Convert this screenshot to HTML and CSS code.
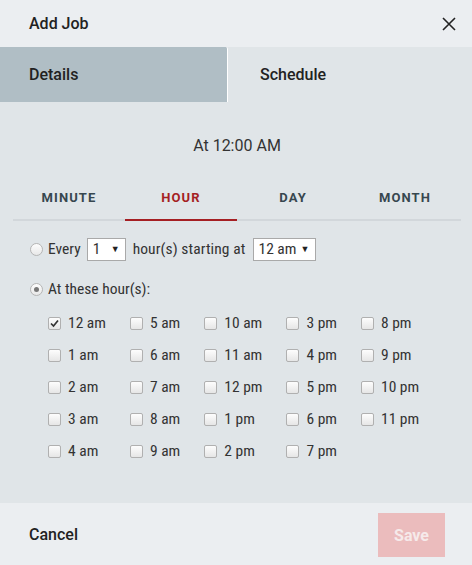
FILE: index.html
```html
<!DOCTYPE html>
<html>
<head>
<meta charset="utf-8">
<link rel="stylesheet" href="styles.css">
</head>
<body>
<div class="dialog">
  <header class="header">
    <span class="title">Add Job</span>
    <svg class="close" width="14" height="14" viewBox="0 0 14 14"><path d="M1 1L13 13M13 1L1 13" stroke="#222" stroke-width="1.6" fill="none"/></svg>
  </header>
  <nav class="tabs">
    <div class="tab tab-active">Details</div>
    <div class="tab">Schedule</div>
  </nav>
  <main class="content">
    <div class="summary">At 12:00 AM</div>
    <div class="subtabs">
      <div class="subtab">MINUTE</div>
      <div class="subtab subtab-active">HOUR</div>
      <div class="subtab">DAY</div>
      <div class="subtab">MONTH</div>
    </div>
    <div class="form">
      <div class="row">
        <span class="radio"></span>
        <span>Every</span>
        <span class="select sel-small">1<span class="caret">▼</span></span>
        <span class="starting">hour(s) starting at</span>
        <span class="select sel-wide">12 am<span class="caret">▼</span></span>
      </div>
      <div class="row">
        <span class="radio radio-on"></span>
        <span>At these hour(s):</span>
      </div>
      <div class="hours">
        <div class="col">
          <label class="hour"><span class="cb cb-on"><svg width="9" height="9" viewBox="0 0 9 9"><path d="M1 4.5L3.5 7L8 1.5" stroke="#333" stroke-width="1.7" fill="none"/></svg></span>12 am</label>
          <label class="hour"><span class="cb"></span>1 am</label>
          <label class="hour"><span class="cb"></span>2 am</label>
          <label class="hour"><span class="cb"></span>3 am</label>
          <label class="hour"><span class="cb"></span>4 am</label>
        </div>
        <div class="col">
          <label class="hour"><span class="cb"></span>5 am</label>
          <label class="hour"><span class="cb"></span>6 am</label>
          <label class="hour"><span class="cb"></span>7 am</label>
          <label class="hour"><span class="cb"></span>8 am</label>
          <label class="hour"><span class="cb"></span>9 am</label>
        </div>
        <div class="col">
          <label class="hour"><span class="cb"></span>10 am</label>
          <label class="hour"><span class="cb"></span>11 am</label>
          <label class="hour"><span class="cb"></span>12 pm</label>
          <label class="hour"><span class="cb"></span>1 pm</label>
          <label class="hour"><span class="cb"></span>2 pm</label>
        </div>
        <div class="col">
          <label class="hour"><span class="cb"></span>3 pm</label>
          <label class="hour"><span class="cb"></span>4 pm</label>
          <label class="hour"><span class="cb"></span>5 pm</label>
          <label class="hour"><span class="cb"></span>6 pm</label>
          <label class="hour"><span class="cb"></span>7 pm</label>
        </div>
        <div class="col">
          <label class="hour"><span class="cb"></span>8 pm</label>
          <label class="hour"><span class="cb"></span>9 pm</label>
          <label class="hour"><span class="cb"></span>10 pm</label>
          <label class="hour"><span class="cb"></span>11 pm</label>
        </div>
      </div>
    </div>
  </main>
  <footer class="footer">
    <span class="cancel">Cancel</span>
    <span class="save">Save</span>
  </footer>
</div>
</body>
</html>
```
FILE: styles.css
```css
* { box-sizing: border-box; }
html, body { margin: 0; padding: 0; }
body { width: 472px; height: 565px; font-family: Roboto, "Liberation Sans", sans-serif; background: #e0e5e8; }
.dialog { display: flex; flex-direction: column; height: 565px; }
.header { height: 47px; background: #ebeef1; display: flex; align-items: center; justify-content: space-between; padding: 0 16px 0 29px; }
.title { font-size: 16px; font-weight: 500; color: #222; }
.close { display: block; }
.tabs { display: flex; height: 55px; background: #e0e5e8; }
.tab { display: flex; align-items: center; font-size: 16px; font-weight: 500; color: #222; }
.tab-active { width: 228px; background: #b0bec5; padding-left: 29px; border-right: 1px solid #ffffff; border-top-right-radius: 2px; }
.tab:not(.tab-active) { flex: 1; padding-left: 32px; }
.content { flex: 1; background: #e0e5e8; padding: 0 11px 0 13px; }
.summary { text-align: center; font-size: 16px; color: #333; padding-top: 34px; height: 80px; }
.subtabs { display: flex; border-bottom: 2px solid #d2d7db; height: 39px; }
.subtab { width: 112px; text-align: center; font-size: 13px; font-weight: 700; letter-spacing: 1.1px; color: #37474f; padding-top: 8px; margin-bottom: -2px; }
.subtab-active { color: #a51f23; border-bottom: 2px solid #a51f23; }
.form { font-family: Roboto, sans-serif; font-stretch: 75%; font-size: 15.5px; color: #333; padding-left: 17px; }
.row { display: flex; align-items: center; gap: 6px; height: 40px; }
.row:first-child { margin-top: 8px; }
.radio { width: 13px; height: 13px; border-radius: 50%; border: 1px solid #b5b5b5; background: linear-gradient(#fdfdfd, #e8e8e8); margin-right: -1px; position: relative; }
.radio-on::after { content: ""; position: absolute; left: 3px; top: 3px; width: 5px; height: 5px; border-radius: 50%; background: #777; }
.starting { letter-spacing: 0.1px; margin-left: 1px; margin-right: 1px; }
.select { display: inline-flex; align-items: center; justify-content: space-between; height: 23px; background: #fff; border: 1px solid #a9a9a9; padding: 0 5px 0 5px; }
.sel-small { width: 39px; }
.sel-wide { width: 63px; }
.caret { font-size: 9px; color: #222; }
.hours { display: flex; gap: 24px; padding-left: 18px; margin-top: -2px; }
.col { display: flex; flex-direction: column; }
.hour { display: flex; align-items: center; height: 32px; gap: 7px; }
.cb { width: 13px; height: 13px; border: 1px solid #b0b0b0; border-radius: 2px; background: linear-gradient(#fdfdfd, #e6e6e6); display: flex; align-items: center; justify-content: center; }
.footer { height: 62px; background: #ebeef1; display: flex; align-items: center; justify-content: space-between; padding: 0 27px 0 29px; }
.cancel { font-size: 16px; font-weight: 500; color: #222; }
.save { width: 67px; height: 44px; background: #ebbcbd; color: #f6eaea; font-weight: 700; font-size: 16px; display: flex; align-items: center; justify-content: center; margin-top: 2px; }
```
